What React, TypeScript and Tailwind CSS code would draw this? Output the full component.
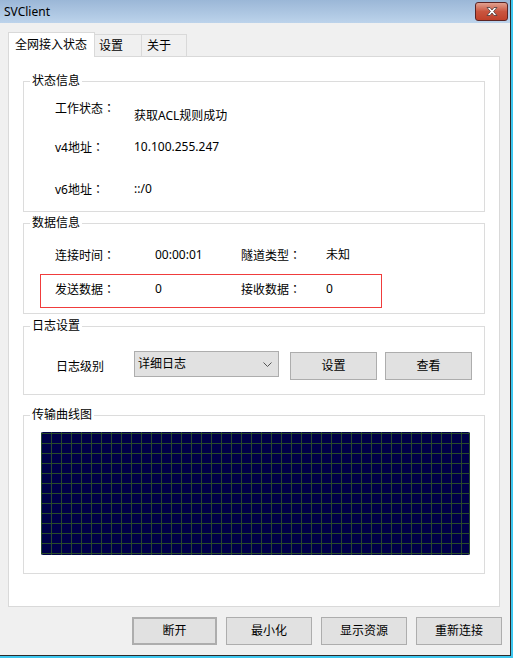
import React from 'react';

// SVClient main dialog: status tab with grouped fields, log settings and a traffic chart

type GroupProps = {
  title: string;
  className?: string;
  children?: React.ReactNode;
};

function Group({ title, className = '', children }: GroupProps) {
  return (
    <fieldset className={`border border-[#dcdcdc] ${className}`}>
      <legend className="ml-[6px] px-[2px] leading-[16px]">{title}</legend>
      {children}
    </fieldset>
  );
}

// field caption with a centred full-width colon
function Caption({ text, className = '' }: { text: string; className?: string }) {
  return (
    <span className={`leading-[16px] ${className}`}>
      {text}
      <span className="font-['Noto_Sans_CJK_JP',sans-serif]">：</span>
    </span>
  );
}

function Button({ label, className = '' }: { label: string; className?: string }) {
  return (
    <button
      type="button"
      className={`flex items-center justify-center bg-[#e1e1e1] border border-[#adadad] leading-[16px] ${className}`}
    >
      {label}
    </button>
  );
}

function TrafficChart() {
  const width = 429;
  const height = 123;
  const cols = Array.from({ length: 43 }, (_, i) => i * 10 + 0.5);
  const rows = Array.from({ length: 13 }, (_, i) => i * 10 + 1.5);
  return (
    <svg width={width} height={height} viewBox={`0 0 ${width} ${height}`} className="block">
      <defs>
        <clipPath id="chart-clip">
          <rect x="0" y="0" width={width} height={height} rx="2" />
        </clipPath>
      </defs>
      <g clipPath="url(#chart-clip)" shapeRendering="crispEdges">
        <rect x="0" y="0" width={width} height={height} fill="#000048" />
        {cols.map((x) => (
          <line key={`v${x}`} x1={x} y1="0" x2={x} y2={height} stroke="#284a2c" strokeWidth="1" />
        ))}
        <line x1={width - 0.5} y1="0" x2={width - 0.5} y2={height} stroke="#284a2c" strokeWidth="1" />
        {rows.map((y) => (
          <line key={`h${y}`} x1="0" y1={y} x2={width} y2={y} stroke="#284a2c" strokeWidth="1" />
        ))}
      </g>
    </svg>
  );
}

export default function App() {
  return (
    <div className="w-[516px] h-[658px] bg-white font-['Noto_Sans','Noto_Sans_CJK_SC',sans-serif] text-[12px] text-black">
      <div className="w-[513px] h-[658px] border-r-2 border-b-2 border-[#3ec6ef]">
        <div className="flex flex-col w-[511px] h-[656px] border-r border-b border-[#2b2b2b]">
          {/* title bar */}
          <div className="flex h-[23px] shrink-0 items-start justify-between bg-gradient-to-b from-[#9bb7d7] to-[#bcd3eb] pl-[4px] pr-[2px]">
            <span className="mt-[4px] leading-[16px]">SVClient</span>
            <div className="mt-[2px] flex h-[19px] w-[33px] items-center justify-center rounded-[3px] border border-[#5b2424] bg-gradient-to-b from-[#e0a090] via-[#c9553f] to-[#c0412a]">
              <svg width="14" height="11" viewBox="0 0 14 11">
                <path
                  d="M2 1.5 L5 1.5 L7 4 L9 1.5 L12 1.5 L8.6 5.5 L12 9.5 L9 9.5 L7 7 L5 9.5 L2 9.5 L5.4 5.5 Z"
                  fill="#ffffff"
                  stroke="#4a3a3a"
                  strokeWidth="0.8"
                  strokeLinejoin="round"
                />
              </svg>
            </div>
          </div>

          {/* body */}
          <div className="flex flex-1 flex-col bg-[#f0f0f0] pt-[9px]">
            <div className="relative z-10 -mb-px ml-[8px] flex h-[25px] items-end">
              <div className="flex h-[25px] w-[87px] items-center border-x border-t border-[#d9d9d9] bg-white pl-[6px] leading-[16px]">
                全网接入状态
              </div>
              <div className="flex h-[23px] w-[47px] items-center border-r border-b border-t border-[#d9d9d9] pl-[4px] leading-[16px]">
                设置
              </div>
              <div className="flex h-[23px] w-[45px] items-center border-r border-b border-t border-[#d9d9d9] pl-[5px] leading-[16px]">
                关于
              </div>
            </div>

            <div className="ml-[8px] flex h-[551px] w-[492px] flex-col border border-[#d9d9d9] bg-white pl-[14px] pr-[13px] pt-[16px]">
              <Group title="状态信息" className="h-[139px] w-[462px]">
                <div className="flex flex-col pl-[31px]">
                  <div className="mt-[11px] flex items-start">
                    <Caption text="工作状态" className="w-[79px]" />
                    <span className="mt-[8px] leading-[16px]">获取ACL规则成功</span>
                  </div>
                  <div className="mt-[15px] flex">
                    <Caption text="v4地址" className="w-[79px]" />
                    <span className="leading-[16px]">10.100.255.247</span>
                  </div>
                  <div className="mt-[25px] flex">
                    <Caption text="v6地址" className="w-[79px]" />
                    <span className="leading-[16px]">::/0</span>
                  </div>
                </div>
              </Group>

              <Group title="数据信息" className="mt-[3px] h-[99px] w-[462px]">
                <div className="mt-[16px] flex pl-[31px] leading-[16px]">
                  <Caption text="连接时间" className="w-[100px]" />
                  <span className="w-[86px]">00:00:01</span>
                  <Caption text="隧道类型" className="w-[85px]" />
                  <span>未知</span>
                </div>
                <div className="ml-[16px] mt-[10px] flex h-[34px] w-[342px] border border-[#f03c3c] pl-[14px] pt-[6px] leading-[16px]">
                  <Caption text="发送数据" className="w-[100px]" />
                  <span className="w-[86px]">0</span>
                  <Caption text="接收数据" className="w-[85px]" />
                  <span>0</span>
                </div>
              </Group>

              <Group title="日志设置" className="mt-[4px] h-[77px] w-[462px]">
                <div className="flex items-start pl-[32px]">
                  <span className="mt-[25px] w-[78px] leading-[16px]">日志级别</span>
                  <div className="mt-[17px] flex h-[26px] w-[145px] items-center justify-between border border-[#adadad] bg-[#e1e1e1] pl-[3px] pr-[6px] leading-[16px]">
                    <span>详细日志</span>
                    <svg width="9" height="5" viewBox="0 0 9 5">
                      <path d="M0.5 0.5 L4.5 4.5 L8.5 0.5" fill="none" stroke="#555555" strokeWidth="1" />
                    </svg>
                  </div>
                  <Button label="设置" className="ml-[11px] mt-[18px] h-[28px] w-[87px]" />
                  <Button label="查看" className="ml-[8px] mt-[18px] h-[28px] w-[87px]" />
                </div>
              </Group>

              <Group title="传输曲线图" className="mt-[12px] h-[167px] w-[462px]">
                <div className="ml-[17px] mt-[9px]">
                  <TrafficChart />
                </div>
              </Group>
            </div>

            <div className="mt-[10px] flex justify-end gap-[9px] pr-[8px]">
              <Button label="断开" className="h-[28px] w-[85px] border-2 border-[#0078d7]" />
              <Button label="最小化" className="h-[28px] w-[86px]" />
              <Button label="显示资源" className="h-[28px] w-[86px]" />
              <Button label="重新连接" className="h-[28px] w-[86px]" />
            </div>
          </div>
        </div>
      </div>
    </div>
  );
}
